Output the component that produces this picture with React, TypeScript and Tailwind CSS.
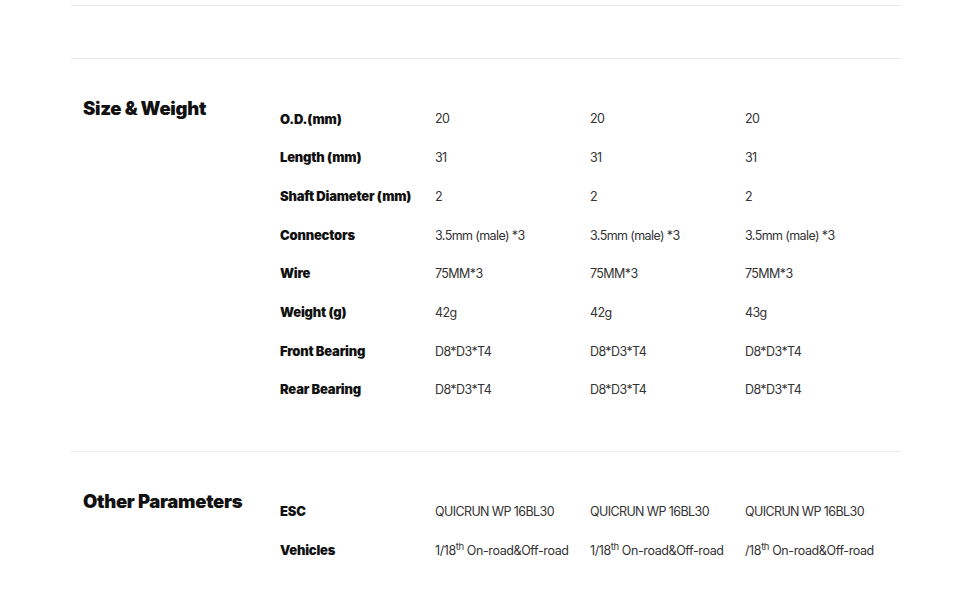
import React from "react";

const font = { fontFamily: "Inter, 'Noto Sans', sans-serif" };

type Row = { label: string; values: React.ReactNode[] };

const th = (pre: string) => (
  <span className="tracking-[-0.4px]">
    {pre}
    <sup className="text-[9.5px]">th</sup> On-road&amp;Off-road
  </span>
);

const sizeRows: Row[] = [
  { label: "O.D.(mm)", values: ["20", "20", "20"] },
  { label: "Length (mm)", values: ["31", "31", "31"] },
  { label: "Shaft Diameter (mm)", values: ["2", "2", "2"] },
  { label: "Connectors", values: ["3.5mm (male) *3", "3.5mm (male) *3", "3.5mm (male) *3"] },
  { label: "Wire", values: ["75MM*3", "75MM*3", "75MM*3"] },
  { label: "Weight (g)", values: ["42g", "42g", "43g"] },
  { label: "Front Bearing", values: ["D8*D3*T4", "D8*D3*T4", "D8*D3*T4"] },
  { label: "Rear Bearing", values: ["D8*D3*T4", "D8*D3*T4", "D8*D3*T4"] },
];

const otherRows: Row[] = [
  { label: "ESC", values: ["QUICRUN WP 16BL30", "QUICRUN WP 16BL30", "QUICRUN WP 16BL30"] },
  { label: "Vehicles", values: [th("1/18"), th("1/18"), th("/18")] },
];

function Section({ title, rows }: { title: string; rows: Row[] }) {
  return (
    <div className="flex border-t border-[#ebebeb] pt-[41px] pb-[41px]">
      <div className="w-[209px] shrink-0 pl-[12px] -mt-[6px]">
        <h2 className="text-[18.5px] leading-[28px] font-black text-[#111] tracking-[-0.3px]">{title}</h2>
      </div>
      <div className="flex flex-col">
        {rows.map((r) => (
          <div key={r.label} className="flex h-[38.7px] items-center">
            <div className="w-[155px] text-[13px] font-black text-[#111] tracking-[-0.2px]">{r.label}</div>
            {r.values.map((v, i) => (
              <div key={i} className="w-[155px] text-[12.5px] text-[#333] tracking-[-0.6px] pt-[1px]">
                {v}
              </div>
            ))}
          </div>
        ))}
      </div>
    </div>
  );
}

export default function App() {
  return (
    <div className="w-[960px] h-[592px] bg-white overflow-hidden" style={font}>
      <div className="mx-[71px] w-[830px] pt-[5px]">
        <div className="h-[53px] border-t border-[#ebebeb]" />
        <Section title="Size & Weight" rows={sizeRows} />
        <Section title="Other Parameters" rows={otherRows} />
      </div>
    </div>
  );
}
